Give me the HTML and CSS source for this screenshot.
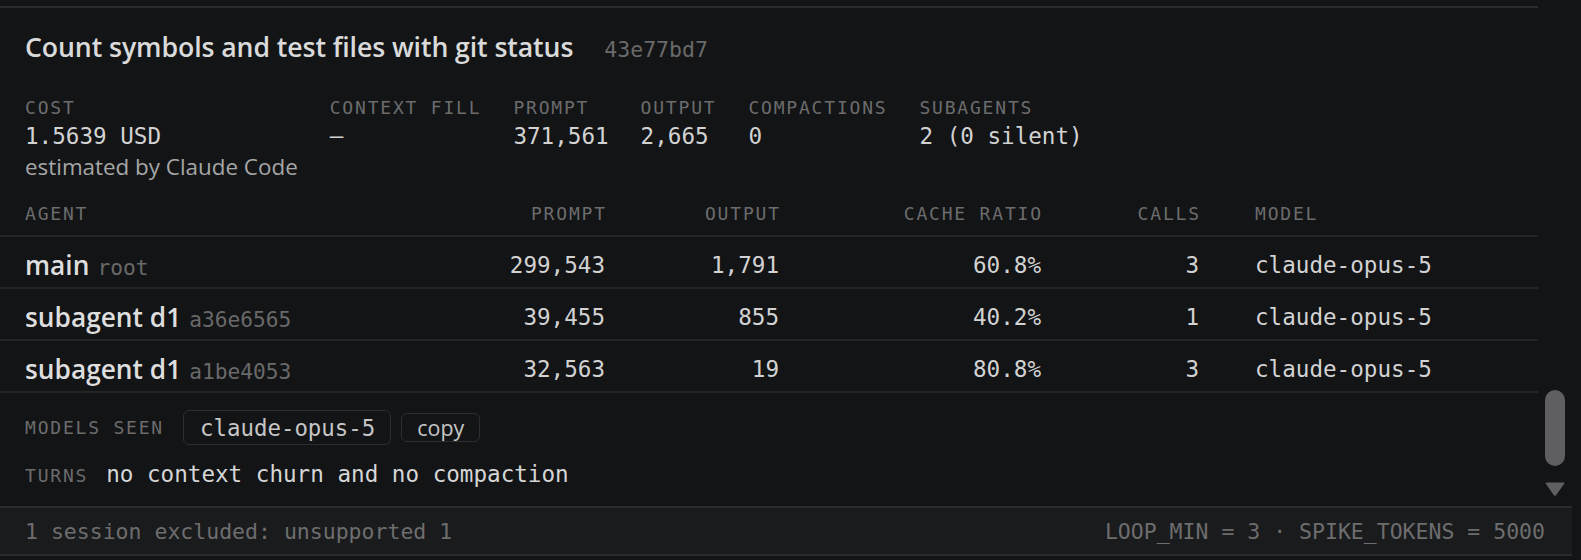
FILE: index.html
```html
<!DOCTYPE html>
<html>
<head>
<meta charset="utf-8">
<link rel="stylesheet" href="styles.css">
</head>
<body>
<div class="app">
  <div class="scroll">
    <div class="content">
      <div class="prev"></div>
      <section class="card">
        <div class="title-row">
          <h1 class="title">Count symbols and test files with git status</h1>
          <span class="hash">43e77bd7</span>
        </div>
        <div class="stats">
          <div class="stat stat-cost">
            <div class="label">COST</div>
            <div class="value">1.5639 USD</div>
            <div class="sub">estimated by Claude Code</div>
          </div>
          <div class="stat">
            <div class="label">CONTEXT FILL</div>
            <div class="value">—</div>
          </div>
          <div class="stat">
            <div class="label">PROMPT</div>
            <div class="value">371,561</div>
          </div>
          <div class="stat">
            <div class="label">OUTPUT</div>
            <div class="value">2,665</div>
          </div>
          <div class="stat">
            <div class="label">COMPACTIONS</div>
            <div class="value">0</div>
          </div>
          <div class="stat">
            <div class="label">SUBAGENTS</div>
            <div class="value">2 (0 silent)</div>
          </div>
        </div>
        <div class="table">
          <div class="trow thead">
            <div class="cell">AGENT</div>
            <div class="cell num">PROMPT</div>
            <div class="cell num">OUTPUT</div>
            <div class="cell num">CACHE RATIO</div>
            <div class="cell num">CALLS</div>
            <div class="cell model">MODEL</div>
          </div>
          <div class="trow">
            <div class="cell agent"><span class="aname">main</span><span class="aid">root</span></div>
            <div class="cell num">299,543</div>
            <div class="cell num">1,791</div>
            <div class="cell num">60.8%</div>
            <div class="cell num">3</div>
            <div class="cell model">claude-opus-5</div>
          </div>
          <div class="trow">
            <div class="cell agent"><span class="aname">subagent d1</span><span class="aid">a36e6565</span></div>
            <div class="cell num">39,455</div>
            <div class="cell num">855</div>
            <div class="cell num">40.2%</div>
            <div class="cell num">1</div>
            <div class="cell model">claude-opus-5</div>
          </div>
          <div class="trow">
            <div class="cell agent"><span class="aname">subagent d1</span><span class="aid">a1be4053</span></div>
            <div class="cell num">32,563</div>
            <div class="cell num">19</div>
            <div class="cell num">80.8%</div>
            <div class="cell num">3</div>
            <div class="cell model">claude-opus-5</div>
          </div>
        </div>
        <div class="models">
          <span class="label">MODELS SEEN</span>
          <span class="chip">claude-opus-5</span>
          <button class="copy">copy</button>
        </div>
        <div class="turns">
          <span class="label">TURNS</span>
          <span class="turns-text">no context churn and no compaction</span>
        </div>
      </section>
    </div>
    <div class="scrollbar">
      <div class="thumb"></div>
      <svg class="arrow" width="22" height="16" viewBox="0 0 22 16"><path d="M2.5 1.5 H19.5 Q21 1.5 20 3 L12.3 14 Q11 15.6 9.7 14 L2 3 Q1 1.5 2.5 1.5 Z" fill="#5f5f61"/></svg>
    </div>
  </div>
  <footer class="footer">
    <span>1 session excluded: unsupported 1</span>
    <span>LOOP_MIN = 3 · SPIKE_TOKENS = 5000</span>
  </footer>
</div>
</body>
</html>
```

FILE: styles.css
```css
html, body {
  margin: 0;
  padding: 0;
  background: #131416;
  height: 560px;
  overflow: hidden;
}

.app {
  width: 1572px;
  display: flex;
  flex-direction: column;
}

.scroll {
  display: flex;
  height: 506px;
}

.content {
  width: 1538px;
  display: flex;
  flex-direction: column;
}

.prev {
  margin-top: 6px;
  border-top: 2px solid #2a2b2d;
}

.card {
  padding: 24px 0 18px 0;
  font-family: "DejaVu Sans Mono", monospace;
  color: #d2d2d2;
}

.title-row {
  display: flex;
  align-items: baseline;
  gap: 31px;
  padding-left: 25px;
  height: 30px;
}

.title {
  margin: 0;
  font-family: "Open Sans", sans-serif;
  font-weight: 600;
  font-size: 26.7px;
  line-height: 30px;
  color: #dadada;
  letter-spacing: -0.1px;
}

.hash {
  font-family: "DejaVu Sans Mono", monospace;
  font-size: 21.5px;
  color: #6a6a6b;
}

.label {
  font-family: "DejaVu Sans Mono", monospace;
  font-size: 18px;
  letter-spacing: 1.8px;
  color: #6c6c6d;
}

.stats {
  display: flex;
  gap: 32px;
  padding-left: 25px;
  margin-top: 32px;
}

.stat .label {
  line-height: 27px;
}

.stat .value {
  font-size: 22.6px;
  line-height: 30px;
  color: #d2d2d2;
}

.stat .sub {
  font-family: "Open Sans", sans-serif;
  font-size: 22.4px;
  line-height: 32px;
  color: #a6a6a6;
}

.table {
  margin-top: 18px;
}

.trow {
  display: grid;
  grid-template-columns: 430px 150px 174px 262px 158px 1fr;
  height: 28px;
  padding: 14px 0 8px 25px;
  border-bottom: 2px solid #232426;
  font-size: 22.6px;
  line-height: 28px;
  color: #d2d2d2;
}

.trow.thead {
  height: 26px;
  padding: 0 0 8px 25px;
  font-size: 18px;
  letter-spacing: 1.8px;
  line-height: 26px;
  color: #6c6c6d;
}

.cell {
  white-space: nowrap;
}

.cell.num {
  text-align: right;
}

.thead .cell.num {
  margin-right: -1.8px;
}

.cell.model {
  padding-left: 56px;
}

.aname {
  font-family: "Open Sans", sans-serif;
  font-weight: 600;
  font-size: 26.3px;
  line-height: 28px;
  color: #dedede;
}

.aid {
  margin-left: 8px;
  font-size: 21.2px;
  line-height: 28px;
  color: #69696a;
}

.models {
  display: flex;
  align-items: center;
  padding: 17px 0 0 25px;
  height: 35px;
}

.models .label {
  margin-right: 19px;
}

.chip {
  box-sizing: border-box;
  height: 35px;
  display: inline-flex;
  align-items: center;
  padding: 0 15px 0 16px;
  border: 1.5px solid #2d2e30;
  border-radius: 6px;
  font-size: 22.4px;
  color: #c6c6c6;
}

.copy {
  box-sizing: border-box;
  margin-left: 10px;
  height: 29px;
  padding: 0 15px;
  background: transparent;
  border: 1.5px solid #2d2e30;
  border-radius: 6px;
  font-family: "Open Sans", sans-serif;
  font-size: 21.4px;
  line-height: 24px;
  color: #c6c6c6;
}

.turns {
  display: flex;
  align-items: baseline;
  gap: 18px;
  padding: 14px 0 0 25px;
  line-height: 30px;
}

.turns-text {
  font-size: 22.6px;
  color: #d6d6d6;
}

.scrollbar {
  position: relative;
  width: 34px;
}

.thumb {
  position: absolute;
  left: 7px;
  top: 390px;
  width: 20px;
  height: 76px;
  border-radius: 10px;
  background: #5f5f61;
}

.arrow {
  position: absolute;
  left: 6px;
  top: 481px;
}

.footer {
  height: 46px;
  border-top: 2px solid #2a2b2d;
  border-bottom: 2px solid #2a2b2d;
  background: #1a1b1d;
  display: flex;
  align-items: center;
  justify-content: space-between;
  padding: 0 27px 0 25px;
  font-family: "DejaVu Sans Mono", monospace;
  font-size: 21.5px;
  color: #6d6d6e;
}
```
